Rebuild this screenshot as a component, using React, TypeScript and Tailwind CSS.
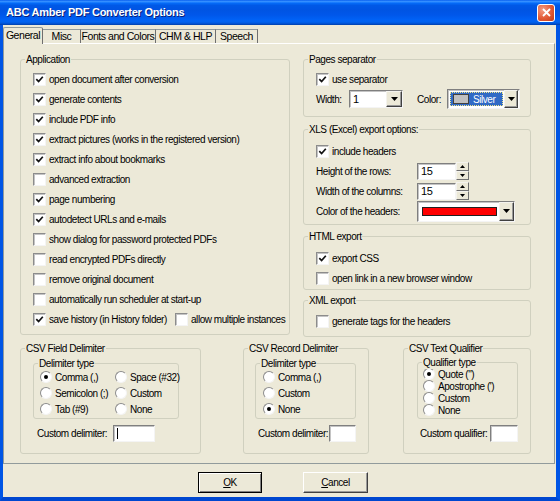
import React from 'react';

const face = "font-['Liberation_Sans',Arial,sans-serif]";

function Check({ on }: { on?: boolean }) {
  return (
    <span className="flex h-[13px] w-[13px] shrink-0 items-center justify-center border border-[#8C8C8C] border-b-[#F4F4F4] border-r-[#F4F4F4] bg-white shadow-[inset_1px_1px_0_#C4C4C4]">
      {on && (
        <svg width="9" height="9" viewBox="0 0 9 9">
          <path d="M1.3 4.1 3.6 6.5 7.8 1.7" fill="none" stroke="#111" strokeWidth="1.7" />
        </svg>
      )}
    </span>
  );
}

function Radio({ on }: { on?: boolean }) {
  return (
    <span className="flex h-[12px] w-[12px] shrink-0 items-center justify-center rounded-full border border-[#8C8C8C] border-b-[#F4F4F4] border-r-[#F4F4F4] bg-white">
      {on && <span className="h-[4px] w-[4px] rounded-full bg-black" />}
    </span>
  );
}

function CheckRow({ label, on, className = '' }: { label: string; on?: boolean; className?: string }) {
  return (
    <div className={`flex h-[20px] items-center gap-[3px] ${className}`}>
      <Check on={on} />
      <span className="whitespace-nowrap">{label}</span>
    </div>
  );
}

function RadioRow({ label, on, h = 'h-[16px]' }: { label: string; on?: boolean; h?: string }) {
  return (
    <div className={`flex ${h} items-center gap-[3px]`}>
      <Radio on={on} />
      <span className="whitespace-nowrap">{label}</span>
    </div>
  );
}

function Group({ label, className = '', children }: { label: string; className?: string; children?: React.ReactNode }) {
  return (
    <div className={`relative shrink-0 rounded-[3px] border border-[#D0D0BF] ${className}`}>
      <span className="absolute -top-[7px] left-[4px] bg-[#ECE9D8] px-px leading-[13px] whitespace-nowrap">{label}</span>
      {children}
    </div>
  );
}

function Arrow() {
  return (
    <svg width="7" height="4" viewBox="0 0 7 4">
      <path d="M0 0h7L3.5 4z" fill="#000" />
    </svg>
  );
}

function DropBtn({ className = '' }: { className?: string }) {
  return (
    <span className={`flex shrink-0 items-center justify-center border border-[#F4F3EE] border-b-[#404040] border-r-[#404040] bg-[#ECE9D8] shadow-[inset_-1px_-1px_0_#9A9A9A] ${className}`}>
      <Arrow />
    </span>
  );
}

const sunken =
  'border border-[#7F7F7F] border-b-[#F4F4F4] border-r-[#F4F4F4] bg-white shadow-[inset_1px_1px_0_#C4C4C4]';

function Edit({ w, caret }: { w: string; caret?: boolean }) {
  return (
    <span className={`flex h-[17px] shrink-0 items-center pl-[3px] ${sunken} ${w}`}>
      {caret && <span className="h-[11px] w-px bg-black" />}
    </span>
  );
}

function Spin({ value }: { value: string }) {
  return (
    <div className="flex items-center">
      <span className={`flex h-[17px] w-[39px] items-center pl-[3px] text-[11px] ${sunken}`}>{value}</span>
      <div className="flex flex-col">
        <span className="flex h-[9px] w-[13px] items-center justify-center border border-[#F4F3EE] border-b-[#707070] border-r-[#707070] bg-[#ECE9D8]">
          <svg width="5" height="3" viewBox="0 0 5 3"><path d="M0 3h5L2.5 0z" fill="#000" /></svg>
        </span>
        <span className="flex h-[9px] w-[13px] items-center justify-center border border-[#F4F3EE] border-b-[#707070] border-r-[#707070] bg-[#ECE9D8]">
          <svg width="5" height="3" viewBox="0 0 5 3"><path d="M0 0h5L2.5 3z" fill="#000" /></svg>
        </span>
      </div>
    </div>
  );
}

const appItems: [string, boolean][] = [
  ['open document after conversion', true],
  ['generate contents', true],
  ['include PDF info', true],
  ['extract pictures (works in the registered version)', true],
  ['extract info about bookmarks', true],
  ['advanced extraction', false],
  ['page numbering', true],
  ['autodetect URLs and e-mails', true],
  ['show dialog for password protected PDFs', false],
  ['read encrypted PDFs directly', false],
  ['remove original document', false],
  ['automatically run scheduler at start-up', false],
];

const tabs = ['General', 'Misc', 'Fonts and Colors', 'CHM & HLP', 'Speech'];
const tabW = ['w-[40px]', 'w-[38px]', 'w-[75px]', 'w-[60px]', 'w-[42px]'];

export default function App() {
  return (
    <div className={`${face} flex h-[501px] w-[560px] flex-col text-[10px] tracking-[-0.45px] text-black`}>
      {/* title bar */}
      <div className="flex h-[25px] shrink-0 items-center bg-[linear-gradient(to_bottom,#0058EE_0%,#3A93FF_5%,#1E80FF_9%,#0468F5_14%,#0058E6_22%,#0054E3_40%,#0057EA_60%,#0061F5_78%,#0062EF_88%,#0050D0_95%,#003EA8_100%)] pl-[6px]">
        <span className="text-[11px] font-bold tracking-[-0.25px] text-white [text-shadow:1px_1px_0_#0A1F7A]">
          ABC Amber PDF Converter Options
        </span>
        <span className="ml-auto mr-[5px] flex h-[18px] w-[18px] items-center justify-center rounded-[3px] border border-white bg-[radial-gradient(circle_at_30%_30%,#F39C83,#E25A36_55%,#C23A16)]">
          <svg width="9" height="9" viewBox="0 0 9 9">
            <path d="M1 1 8 8M8 1 1 8" stroke="#fff" strokeWidth="1.8" />
          </svg>
        </span>
      </div>

      {/* client */}
      <div className="flex flex-1 flex-col border-x-[3px] border-b-[4px] border-x-[#0055E5] border-b-[#0047D0] border-r-[4px] bg-[#ECE9D8] pt-px">
        {/* tabs */}
        <div className="relative z-10 flex h-[17px] items-end">
          {tabs.map((t, i) =>
            i === 0 ? (
              <div
                key={t}
                className={`${tabW[i]} -mb-px flex h-[17px] items-center justify-center rounded-t-[2px] border border-b-0 border-[#919B9C] border-r-[#6F6F6F] bg-[#ECE9D8] text-[10.5px]`}
              >
                {t}
              </div>
            ) : (
              <div
                key={t}
                className={`${tabW[i]} flex h-[14px] items-center justify-center border-r border-t border-[#919B9C] border-r-[#6F6F6F] bg-[#ECE9D8] text-[10.5px] whitespace-nowrap`}
              >
                {t}
              </div>
            )
          )}
        </div>

        {/* panel */}
        <div className="h-[421px] w-[552px] border border-[#919B9C] border-t-white pl-[16px] pt-[15px]">
          <div className="flex items-start gap-[13px]">
            {/* Application */}
            <Group label="Application" className="h-[276px] w-[270px] pl-[12px] pt-[9px]">
              {appItems.map(([l, on]) => (
                <CheckRow key={l} label={l} on={on} />
              ))}
              <div className="flex">
                <CheckRow label="save history (in History folder)" on className="w-[142px]" />
                <CheckRow label="allow multiple instances" />
              </div>
            </Group>

            {/* right column */}
            <div className="flex w-[228px] flex-col">
              <Group label="Pages separator" className="h-[58px] pl-[12px] pt-[9px]">
                <CheckRow label="use separator" on />
                <div className="flex h-[20px] items-center">
                  <span className="w-[33px]">Width:</span>
                  <span className={`flex h-[18px] w-[54px] items-center justify-between pl-[3px] text-[11px] ${sunken}`}>
                    1
                    <DropBtn className="h-[16px] w-[16px]" />
                  </span>
                  <span className="ml-[14px] w-[30px]">Color:</span>
                  <span className={`flex h-[20px] w-[73px] items-center gap-[1px] pl-[2px] ${sunken}`}>
                    <span className="flex h-[14px] w-[53px] items-center gap-[4px] border border-dotted border-[#F0E68C] bg-[#316AC5] pl-[2px]">
                      <span className="h-[10px] w-[16px] shrink-0 border border-[#404040] bg-[#C0C0C0]" />
                      <span className="text-[10px] text-white">Silver</span>
                    </span>
                    <DropBtn className="h-[18px] w-[14px]" />
                  </span>
                </div>
              </Group>

              <Group label="XLS (Excel) export options:" className="mt-[12px] h-[96px] pl-[12px] pt-[11px]">
                <CheckRow label="include headers" on />
                <div className="flex h-[20px] items-center">
                  <span className="w-[101px]">Height of the rows:</span>
                  <Spin value="15" />
                </div>
                <div className="flex h-[20px] items-center">
                  <span className="w-[101px]">Width of the columns:</span>
                  <Spin value="15" />
                </div>
                <div className="flex h-[20px] items-center">
                  <span className="w-[101px]">Color of the headers:</span>
                  <span className={`flex h-[21px] w-[98px] items-center justify-between pl-[4px] ${sunken}`}>
                    <span className="h-[9px] w-[75px] border border-[#202020] bg-[#FF0000]" />
                    <DropBtn className="h-[19px] w-[15px]" />
                  </span>
                </div>
              </Group>

              <Group label="HTML export" className="mt-[11px] h-[54px] pl-[12px] pt-[11px]">
                <CheckRow label="export CSS" on />
                <CheckRow label="open link in a new browser window" />
              </Group>

              <Group label="XML export" className="mt-[10px] h-[37px] pl-[12px] pt-[10px]">
                <CheckRow label="generate tags for the headers" />
              </Group>
            </div>
          </div>

          {/* CSV row */}
          <div className="mt-[11px] flex items-start">
            <Group label="CSV Field Delimiter" className="h-[106px] w-[181px] pl-[12px] pt-[14px]">
              <Group label="Delimiter type" className="h-[56px] w-[146px] pl-[6px] pt-[5px]">
                <div className="grid grid-cols-[75px_auto]">
                  <RadioRow label="Comma (,)" on />
                  <RadioRow label="Space (#32)" />
                  <RadioRow label="Semicolon (;)" />
                  <RadioRow label="Custom" />
                  <RadioRow label="Tab (#9)" />
                  <RadioRow label="None" />
                </div>
              </Group>
              <div className="ml-[4px] mt-[6px] flex items-center">
                <span className="w-[76px] whitespace-nowrap">Custom delimiter:</span>
                <Edit w="w-[42px]" caret />
              </div>
            </Group>

            <Group label="CSV Record Delimiter" className="ml-[42px] h-[106px] w-[126px] pl-[11px] pt-[14px]">
              <Group label="Delimiter type" className="h-[56px] w-[101px] pl-[7px] pt-[5px]">
                <RadioRow label="Comma (,)" />
                <RadioRow label="Custom" />
                <RadioRow label="None" on />
              </Group>
              <div className="ml-[3px] mt-[6px] flex items-center">
                <span className="w-[71px] whitespace-nowrap">Custom delimiter:</span>
                <Edit w="w-[27px]" />
              </div>
            </Group>

            <Group label="CSV Text Qualifier" className="ml-[34px] h-[106px] w-[128px] pl-[13px] pt-[13px]">
              <Group label="Qualifier type" className="h-[57px] w-[101px] pl-[5px] pt-[5px]">
                <RadioRow label='Quote (")' on h="h-[12px]" />
                <RadioRow label="Apostrophe (')" h="h-[12px]" />
                <RadioRow label="Custom" h="h-[12px]" />
                <RadioRow label="None" h="h-[12px]" />
              </Group>
              <div className="ml-[3px] mt-[6px] flex items-center">
                <span className="w-[70px] whitespace-nowrap">Custom qualifier:</span>
                <Edit w="w-[28px]" />
              </div>
            </Group>
          </div>
        </div>

        {/* buttons */}
        <div className="flex gap-[41px] pl-[195px] pt-[8px]">
          <button className="flex h-[21px] w-[64px] items-center justify-center border border-black bg-[#ECE9D8] shadow-[inset_1px_1px_0_#fff,inset_-1px_-1px_0_#808080]">
            <span><span className="underline">O</span>K</span>
          </button>
          <button className="flex h-[21px] w-[65px] items-center justify-center border border-[#FFFFFF] border-b-[#404040] border-r-[#404040] bg-[#ECE9D8] shadow-[inset_-1px_-1px_0_#9A9A9A]">
            <span><span className="underline">C</span>ancel</span>
          </button>
        </div>
      </div>
    </div>
  );
}
